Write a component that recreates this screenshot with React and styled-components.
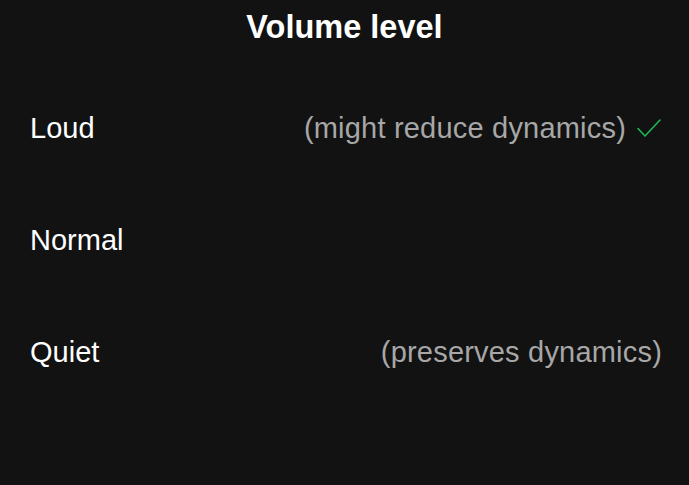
import React from "react";
import styled, { createGlobalStyle } from "styled-components";

const GlobalStyle = createGlobalStyle`
  html, body {
    margin: 0;
    padding: 0;
    background: #121212;
  }
  body {
    font-family: "Liberation Sans", Arial, sans-serif;
  }
`;

const OPTIONS = [
  { label: "Loud", note: "(might reduce dynamics)", selected: true },
  { label: "Normal", note: "" },
  { label: "Quiet", note: "(preserves dynamics)" }
];

export default function App() {
  return (
    <Page>
      <GlobalStyle />
      <Title>Volume level</Title>
      <List>
        {OPTIONS.map(opt => (
          <Row key={opt.label}>
            <Label>{opt.label}</Label>
            <Right>
              {opt.note && <Note>{opt.note}</Note>}
              {opt.selected && (
                <Check width="26" height="22" viewBox="0 0 26 22">
                  <path d="M2 11.5 L9 19 L24 3" />
                </Check>
              )}
            </Right>
          </Row>
        ))}
      </List>
    </Page>
  );
}

const Page = styled.div`
  width: 689px;
  height: 485px;
  background: #121212;
  color: #fff;
  overflow: hidden;
`;

const Title = styled.h1`
  margin: 0;
  height: 52px;
  line-height: 54px;
  text-align: center;
  font-size: 32.5px;
  font-weight: 700;
  color: #fff;
`;

const List = styled.div`
  display: flex;
  flex-direction: column;
  padding: 20px 27px 0 30px;
`;

const Row = styled.div`
  display: flex;
  align-items: center;
  justify-content: space-between;
  height: 112px;
`;

const Label = styled.span`
  font-size: 29px;
  color: #fff;
`;

const Right = styled.div`
  display: flex;
  align-items: center;
  gap: 10px;
`;

const Note = styled.span`
  font-size: 29px;
  letter-spacing: 0.2px;
  color: #a7a7a7;
`;

const Check = styled.svg`
  fill: none;
  stroke: #1db954;
  stroke-width: 1.6;
  stroke-linecap: round;
  stroke-linejoin: round;
`;
